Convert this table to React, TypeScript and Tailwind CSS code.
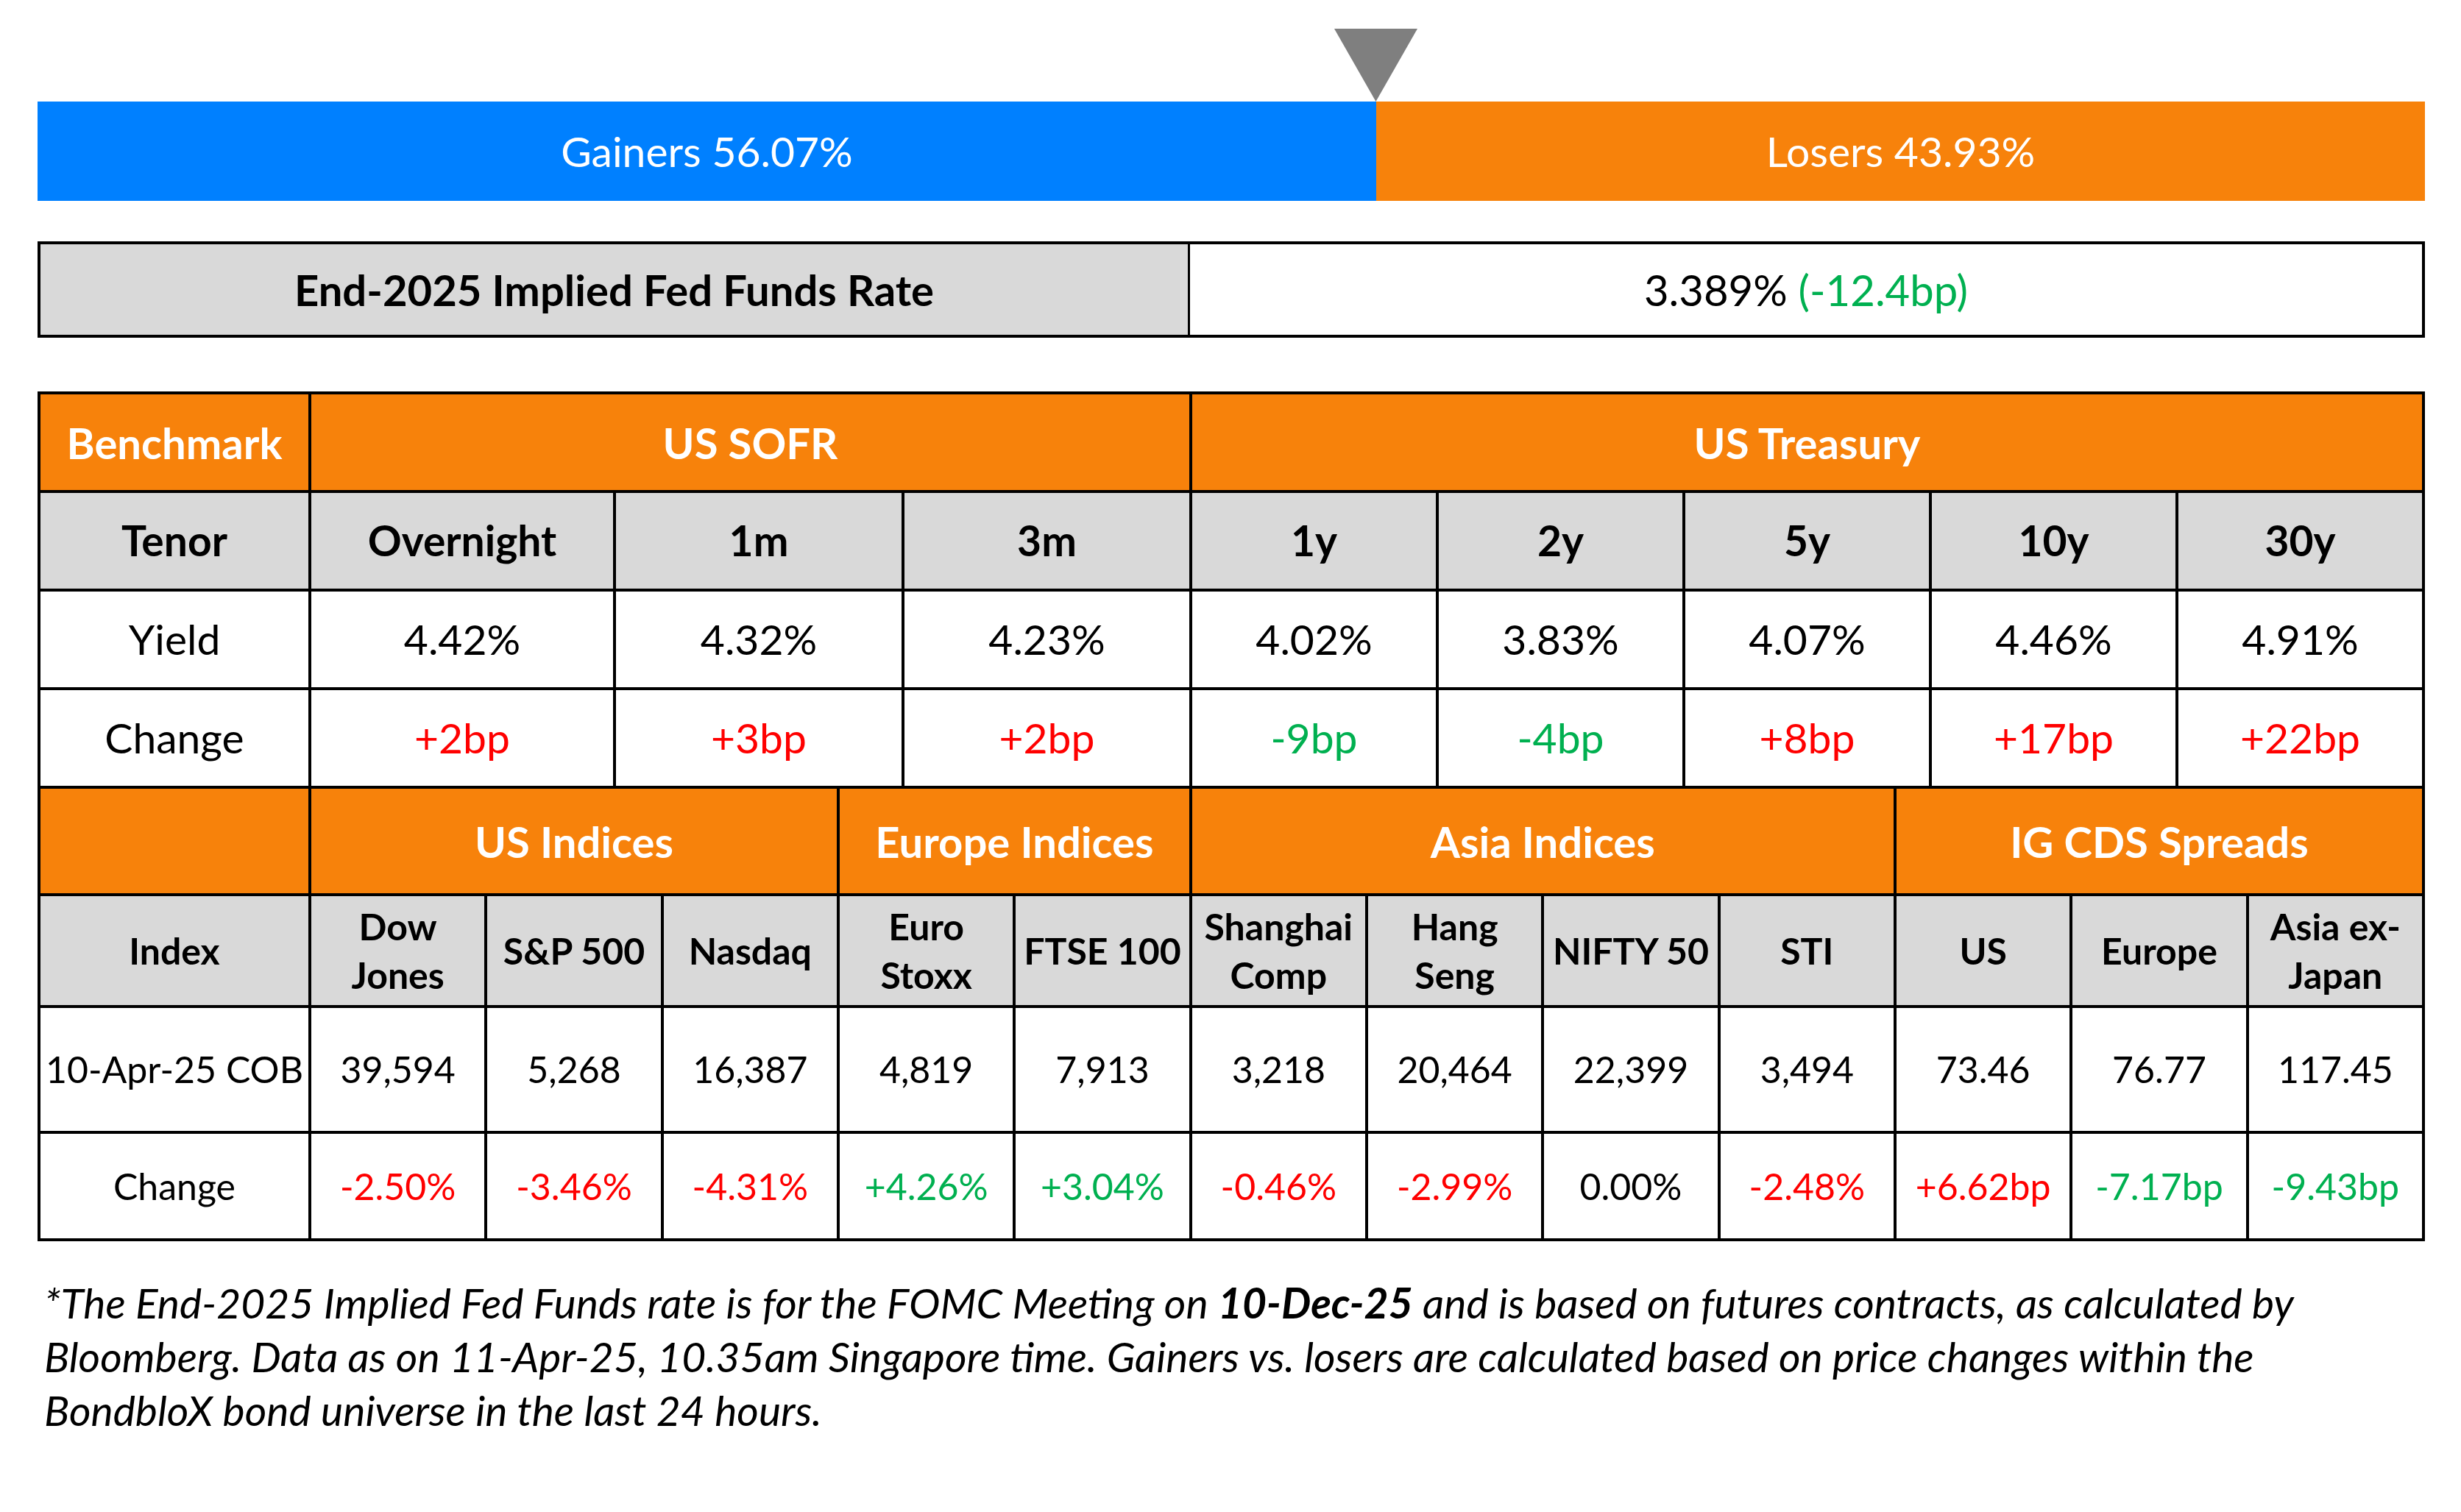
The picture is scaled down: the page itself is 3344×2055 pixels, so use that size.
import React from 'react';
import clsx from 'clsx';

const RED = 'text-[#ff0000]';
const GREEN = 'text-[#00b050]';

const gainers = 56.07;
const losers = 43.93;

const sofr = [
  { tenor: 'Overnight', yld: '4.42%', chg: '+2bp', tone: RED },
  { tenor: '1m', yld: '4.32%', chg: '+3bp', tone: RED },
  { tenor: '3m', yld: '4.23%', chg: '+2bp', tone: RED },
];

const treasury = [
  { tenor: '1y', yld: '4.02%', chg: '-9bp', tone: GREEN },
  { tenor: '2y', yld: '3.83%', chg: '-4bp', tone: GREEN },
  { tenor: '5y', yld: '4.07%', chg: '+8bp', tone: RED },
  { tenor: '10y', yld: '4.46%', chg: '+17bp', tone: RED },
  { tenor: '30y', yld: '4.91%', chg: '+22bp', tone: RED },
];

const groups = [
  { title: 'US Indices', span: 'col-span-3' },
  { title: 'Europe Indices', span: 'col-span-2' },
  { title: 'Asia Indices', span: 'col-span-4' },
  { title: 'IG CDS Spreads', span: 'col-span-3' },
];

const indices = [
  { name: ['Dow', 'Jones'], value: '39,594', chg: '-2.50%', tone: RED },
  { name: ['S&P 500'], value: '5,268', chg: '-3.46%', tone: RED },
  { name: ['Nasdaq'], value: '16,387', chg: '-4.31%', tone: RED },
  { name: ['Euro', 'Stoxx'], value: '4,819', chg: '+4.26%', tone: GREEN },
  { name: ['FTSE 100'], value: '7,913', chg: '+3.04%', tone: GREEN },
  { name: ['Shanghai', 'Comp'], value: '3,218', chg: '-0.46%', tone: RED },
  { name: ['Hang', 'Seng'], value: '20,464', chg: '-2.99%', tone: RED },
  { name: ['NIFTY 50'], value: '22,399', chg: '0.00%', tone: 'text-black' },
  { name: ['STI'], value: '3,494', chg: '-2.48%', tone: RED },
  { name: ['US'], value: '73.46', chg: '+6.62bp', tone: RED },
  { name: ['Europe'], value: '76.77', chg: '-7.17bp', tone: GREEN },
  { name: ['Asia ex-', 'Japan'], value: '117.45', chg: '-9.43bp', tone: GREEN },
];

function Cell({ className, children }: { className?: string; children?: React.ReactNode }) {
  return (
    <div className={clsx('flex items-center justify-center text-center whitespace-nowrap', className)}>
      {children}
    </div>
  );
}

export default function App() {
  const tenors = [...sofr, ...treasury];

  return (
    <div className="w-[3344px] h-[2055px] bg-white font-[Lato,sans-serif] text-black overflow-hidden">
      <div className="ml-[51px] w-[3244px] pt-[39px]">
        {/* Marker */}
        <div className="flex h-[99px]">
          <div style={{ width: `calc(${gainers}% - 56.5px)` }} />
          <svg width="113" height="99" viewBox="0 0 113 99">
            <polygon points="0,0 113,0 56.5,99" fill="#7f7f7f" />
          </svg>
        </div>

        {/* Gainers vs losers */}
        <div className="flex h-[135px] text-[57px] text-white">
          <div className="flex items-center justify-center bg-[#0080ff]" style={{ width: `${gainers}%` }}>
            Gainers {gainers.toFixed(2)}%
          </div>
          <div className="flex flex-1 items-center justify-center bg-[#f7820b]">
            Losers {losers.toFixed(2)}%
          </div>
        </div>

        {/* Implied rate */}
        <div className="mt-[55px] grid h-[131px] grid-cols-[1562px_1fr] border-[4px] border-black text-[58px]">
          <Cell className="border-r-[3px] border-black bg-[#d9d9d9] font-bold">End-2025 Implied Fed Funds Rate</Cell>
          <Cell>
            3.389%&nbsp;<span className={GREEN}>(-12.4bp)</span>
          </Cell>
        </div>

        {/* Rates */}
        <div className="mt-[73px] grid grid-cols-[364px_410px_388px_387px_repeat(5,minmax(0,1fr))] grid-rows-[130px_130px_130px_130px] gap-[4px] bg-black p-[4px] pb-0 text-[57px]">
          <Cell className="bg-[#f7820b] text-[58px] font-bold text-white">Benchmark</Cell>
          <Cell className="col-span-3 bg-[#f7820b] text-[58px] font-bold text-white">US SOFR</Cell>
          <Cell className="col-span-5 bg-[#f7820b] text-[58px] font-bold text-white">US Treasury</Cell>

          <Cell className="bg-[#d9d9d9] font-bold">Tenor</Cell>
          {tenors.map(t => (
            <Cell key={t.tenor} className="bg-[#d9d9d9] font-bold">{t.tenor}</Cell>
          ))}

          <Cell className="bg-white">Yield</Cell>
          {tenors.map(t => (
            <Cell key={t.tenor} className="bg-white">{t.yld}</Cell>
          ))}

          <Cell className="bg-white">Change</Cell>
          {tenors.map(t => (
            <Cell key={t.tenor} className={clsx('bg-white', t.tone)}>{t.chg}</Cell>
          ))}
        </div>

        {/* Indices and CDS */}
        <div className="grid grid-cols-[364px_repeat(12,minmax(0,1fr))] grid-rows-[142px_148px_167px_142px] gap-[4px] bg-black p-[4px] text-[50px]">
          <Cell className="bg-[#f7820b]" />
          {groups.map(g => (
            <Cell key={g.title} className={clsx(g.span, 'bg-[#f7820b] text-[58px] font-bold text-white')}>
              {g.title}
            </Cell>
          ))}

          <Cell className="bg-[#d9d9d9] font-bold">Index</Cell>
          {indices.map(i => (
            <Cell key={i.name.join(' ')} className="bg-[#d9d9d9] font-bold leading-[66px]">
              <div>
                {i.name.map(line => (
                  <div key={line}>{line}</div>
                ))}
              </div>
            </Cell>
          ))}

          <Cell className="bg-white">10-Apr-25 COB</Cell>
          {indices.map(i => (
            <Cell key={i.name.join(' ')} className="bg-white">{i.value}</Cell>
          ))}

          <Cell className="bg-white">Change</Cell>
          {indices.map(i => (
            <Cell key={i.name.join(' ')} className={clsx('bg-white', i.tone)}>{i.chg}</Cell>
          ))}
        </div>

        {/* Footnote */}
        <p className="mt-[47px] ml-[9px] whitespace-nowrap text-[57px] italic leading-[73px]">
          *The End-2025 Implied Fed Funds rate is for the FOMC Meeting on <b>10-Dec-25</b> and is based on futures contracts, as calculated by
          <br />
          Bloomberg. Data as on 11-Apr-25, 10.35am Singapore time. Gainers vs. losers are calculated based on price changes within the
          <br />
          BondbloX bond universe in the last 24 hours.
        </p>
      </div>
    </div>
  );
}
